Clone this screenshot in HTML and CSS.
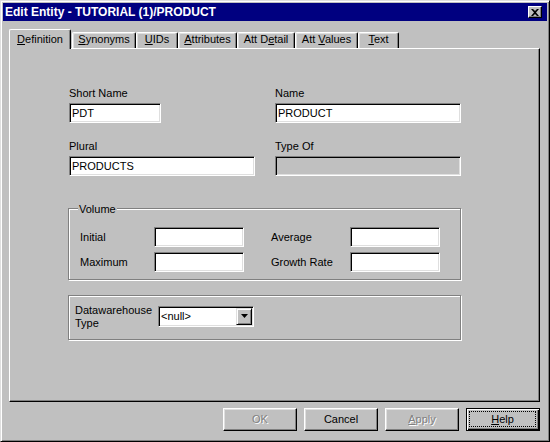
FILE: index.html
```html
<!DOCTYPE html>
<html>
<head>
<meta charset="utf-8">
<title>Edit Entity</title>
<link rel="stylesheet" href="styles.css">
</head>
<body>
<div class="window">
  <div class="titlebar">
    <span class="title">Edit Entity - TUTORIAL (1)/PRODUCT</span>
    <div class="close">
      <svg width="8" height="7" viewBox="0 0 8 7"><path d="M0 0h2l2 2 2-2h2L5 3.5 8 7H6L4 5 2 7H0l3-3.5z" fill="#000"/></svg>
    </div>
  </div>
  <div class="tabs">
    <div class="tab active w-def"><u>D</u>efinition</div>
    <div class="tab w-syn"><u>S</u>ynonyms</div>
    <div class="tab w-uid"><u>U</u>IDs</div>
    <div class="tab w-att"><u>A</u>ttributes</div>
    <div class="tab w-det">Att D<u>e</u>tail</div>
    <div class="tab w-val">Att <u>V</u>alues</div>
    <div class="tab w-txt"><u>T</u>ext</div>
  </div>
  <div class="panel">
    <div class="fields">
      <div class="field">
        <div class="label">Short Name</div>
        <div class="input short">PDT</div>
      </div>
      <div class="field">
        <div class="label">Name</div>
        <div class="input">PRODUCT</div>
      </div>
      <div class="field">
        <div class="label">Plural</div>
        <div class="input">PRODUCTS</div>
      </div>
      <div class="field">
        <div class="label">Type Of</div>
        <div class="input disabled"></div>
      </div>
    </div>
    <div class="group volume">
      <div class="group-title">Volume</div>
      <div class="vol-grid">
        <div class="vlabel">Initial</div>
        <div class="input vinput"></div>
        <div class="vlabel second">Average</div>
        <div class="input vinput"></div>
        <div class="vlabel">Maximum</div>
        <div class="input vinput"></div>
        <div class="vlabel second">Growth Rate</div>
        <div class="input vinput"></div>
      </div>
    </div>
    <div class="group dw">
      <div class="dw-label">Datawarehouse<br>Type</div>
      <div class="select">
        <span class="select-text">&lt;null&gt;</span>
        <span class="drop">
          <svg width="7" height="4" viewBox="0 0 7 4"><path d="M0 0h7L3.5 4z" fill="#000"/></svg>
        </span>
      </div>
    </div>
  </div>
  <div class="buttons">
    <div class="btn disabled">OK</div>
    <div class="btn">Cancel</div>
    <div class="btn disabled"><u>A</u>pply</div>
    <div class="btn default"><span class="focus"><u>H</u>elp</span></div>
  </div>
</div>
</body>
</html>
```
FILE: styles.css
```css
html, body {
  margin: 0;
  padding: 0;
  background: #c0c0c0;
}
body {
  font-family: "Liberation Sans", Arial, sans-serif;
  font-size: 11px;
  line-height: 13px;
  color: #000;
}
u { text-decoration: underline; text-underline-offset: 1px; }

.window {
  width: 550px;
  height: 442px;
  box-sizing: border-box;
  border: 1px solid;
  border-color: #dfdfdf #000 #000 #dfdfdf;
  box-shadow: inset 1px 1px #fff, inset -1px -1px #808080;
  padding: 2px;
  background: #c0c0c0;
  display: flex;
  flex-direction: column;
}

.titlebar {
  height: 18px;
  background: #000080;
  display: flex;
  align-items: center;
  justify-content: space-between;
  padding: 0 5px 0 2px;
}
.title {
  color: #fff;
  font-weight: bold;
  font-size: 12px;
  line-height: 14px;
  white-space: nowrap;
}
.close {
  width: 14px;
  height: 12px;
  box-sizing: border-box;
  background: #c0c0c0;
  border: 1px solid;
  border-color: #fff #000 #000 #fff;
  box-shadow: inset -1px -1px #808080;
  display: flex;
  align-items: center;
  justify-content: center;
  padding-right: 1px;
}
.close svg { display: block; }

.tabs {
  display: flex;
  align-items: flex-end;
  margin: 8px 0 -1px 6px;
}
.tab {
  box-sizing: border-box;
  height: 17px;
  text-align: center;
  border-top: 1px solid #fff;
  border-left: 1px solid #fff;
  border-right: 1px solid #000;
  border-radius: 2px 2px 0 0;
  box-shadow: inset -1px 0 #808080, inset 1px 1px #dfdfdf;
  background: #c0c0c0;
  white-space: nowrap;
}
.tab.active {
  height: 20px;
  padding-top: 3px;
  margin-right: 1px;
  position: relative;
  z-index: 1;
  box-shadow: inset -1px 0 #808080;
}
.w-def { width: 62px; }
.w-syn { width: 64px; }
.w-uid { width: 42px; }
.w-att { width: 59px; }
.w-det { width: 58px; }
.w-val { width: 63px; }
.w-txt { width: 41px; }

.panel {
  height: 354px;
  box-sizing: border-box;
  margin: 0 7px 0 6px;
  border: 1px solid;
  border-color: #fff #000 #000 #fff;
  box-shadow: inset -1px -1px #808080;
  padding: 37px 0 0 58px;
}

.fields {
  display: grid;
  grid-template-columns: 186px 186px;
  column-gap: 20px;
  row-gap: 16px;
  padding-left: 1px;
}
.label {
  line-height: 14px;
  margin-bottom: 3px;
  white-space: nowrap;
}
.input {
  height: 20px;
  box-sizing: border-box;
  border: 1px solid;
  border-color: #808080 #fff #fff #808080;
  box-shadow: inset 1px 1px #000, inset -1px -1px #dfdfdf;
  background: #fff;
  padding: 1px 1px 1px 2px;
  line-height: 16px;
  white-space: nowrap;
  overflow: hidden;
}
.input.short { width: 92px; }
.input.disabled { background: #c0c0c0; }

.group {
  width: 393px;
  box-sizing: border-box;
  border: 1px solid #808080;
  box-shadow: inset 1px 1px #fff, 1px 1px #fff;
}
.volume {
  margin-top: 32px;
  padding: 0 0 7px 11px;
}
.group-title {
  width: fit-content;
  margin: -6px 0 0 -2px;
  padding: 0 1px;
  background: #c0c0c0;
  line-height: 13px;
}
.vol-grid {
  margin-top: 11px;
  display: grid;
  grid-template-columns: 74px 90px 106px 90px;
  row-gap: 5px;
  align-items: center;
}
.vlabel { white-space: nowrap; }
.vlabel.second { padding-left: 27px; }

.dw {
  margin-top: 15px;
  display: flex;
  align-items: center;
  padding: 6px 0 9px 6px;
}
.dw-label {
  width: 83px;
  line-height: 13px;
  margin-top: 2px;
}
.select {
  width: 96px;
  height: 21px;
  box-sizing: border-box;
  border: 1px solid;
  border-color: #808080 #fff #fff #808080;
  box-shadow: inset 1px 1px #000, inset -1px -1px #dfdfdf;
  background: #fff;
  padding: 1px;
  display: flex;
  align-items: center;
}
.select-text {
  flex: 1;
  padding-left: 1px;
  line-height: 15px;
}
.drop {
  width: 16px;
  height: 17px;
  box-sizing: border-box;
  background: #c0c0c0;
  border: 1px solid;
  border-color: #dfdfdf #000 #000 #dfdfdf;
  box-shadow: inset 1px 1px #fff, inset -1px -1px #808080;
  display: flex;
  align-items: center;
  justify-content: center;
}
.drop svg { display: block; }

.buttons {
  margin-top: 6px;
  padding-right: 7px;
  display: flex;
  justify-content: flex-end;
  gap: 7px;
}
.btn {
  width: 74px;
  height: 23px;
  box-sizing: border-box;
  border: 1px solid;
  border-color: #fff #000 #000 #fff;
  box-shadow: inset -1px -1px #808080, inset 1px 1px #dfdfdf;
  display: flex;
  align-items: center;
  justify-content: center;
  padding-bottom: 1px;
}
.btn.disabled {
  color: #808080;
  text-shadow: 1px 1px 0 #fff;
}
.btn.default {
  border: 1px solid #000;
  box-shadow: inset 1px 1px #fff, inset -1px -1px #000, inset -2px -2px #808080;
  padding: 2px 3px 3px 2px;
}
.focus {
  flex: 1;
  align-self: stretch;
  border: 1px dotted #000;
  display: flex;
  align-items: center;
  justify-content: center;
}
```
